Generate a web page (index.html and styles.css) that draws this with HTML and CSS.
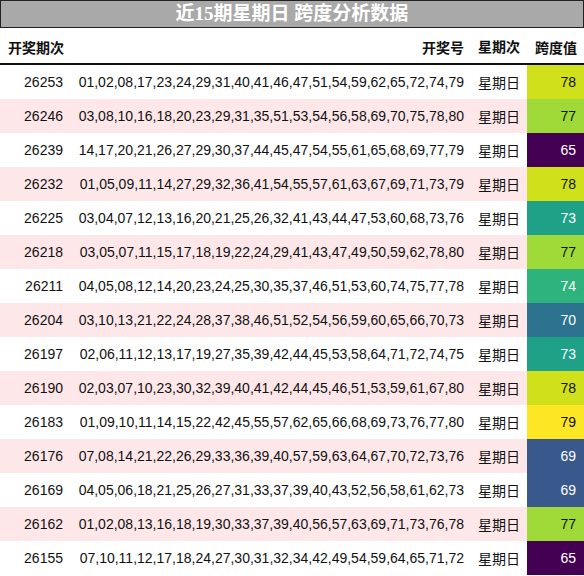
FILE: index.html
```html
<!DOCTYPE html>
<html>
<head>
  <title>近15期星期日 跨度分析数据</title>
  <meta charset="UTF-8">
  <meta name="viewport" content="width=device-width, initial-scale=1.0">
  <link rel="stylesheet" href="styles.css">
</head>
<body>
  <div class="title">近15期星期日 跨度分析数据</div>
  <table class="data">
    <colgroup>
      <col class="c-qi">
      <col class="c-nums">
      <col class="c-day">
      <col class="c-span">
    </colgroup>
    <thead>
      <tr>
        <th class="qi">开奖期次</th>
        <th class="nums">开奖号</th>
        <th class="day">星期次</th>
        <th class="span">跨度值</th>
      </tr>
    </thead>
    <tbody>
      <tr><td class="qi">26253</td><td class="nums">01,02,08,17,23,24,29,31,40,41,46,47,51,54,59,62,65,72,74,79</td><td class="day">星期日</td><td class="span v78">78</td></tr>
      <tr><td class="qi">26246</td><td class="nums">03,08,10,16,18,20,23,29,31,35,51,53,54,56,58,69,70,75,78,80</td><td class="day">星期日</td><td class="span v77">77</td></tr>
      <tr><td class="qi">26239</td><td class="nums">14,17,20,21,26,27,29,30,37,44,45,47,54,55,61,65,68,69,77,79</td><td class="day">星期日</td><td class="span v65">65</td></tr>
      <tr><td class="qi">26232</td><td class="nums">01,05,09,11,14,27,29,32,36,41,54,55,57,61,63,67,69,71,73,79</td><td class="day">星期日</td><td class="span v78">78</td></tr>
      <tr><td class="qi">26225</td><td class="nums">03,04,07,12,13,16,20,21,25,26,32,41,43,44,47,53,60,68,73,76</td><td class="day">星期日</td><td class="span v73">73</td></tr>
      <tr><td class="qi">26218</td><td class="nums">03,05,07,11,15,17,18,19,22,24,29,41,43,47,49,50,59,62,78,80</td><td class="day">星期日</td><td class="span v77">77</td></tr>
      <tr><td class="qi">26211</td><td class="nums">04,05,08,12,14,20,23,24,25,30,35,37,46,51,53,60,74,75,77,78</td><td class="day">星期日</td><td class="span v74">74</td></tr>
      <tr><td class="qi">26204</td><td class="nums">03,10,13,21,22,24,28,37,38,46,51,52,54,56,59,60,65,66,70,73</td><td class="day">星期日</td><td class="span v70">70</td></tr>
      <tr><td class="qi">26197</td><td class="nums">02,06,11,12,13,17,19,27,35,39,42,44,45,53,58,64,71,72,74,75</td><td class="day">星期日</td><td class="span v73">73</td></tr>
      <tr><td class="qi">26190</td><td class="nums">02,03,07,10,23,30,32,39,40,41,42,44,45,46,51,53,59,61,67,80</td><td class="day">星期日</td><td class="span v78">78</td></tr>
      <tr><td class="qi">26183</td><td class="nums">01,09,10,11,14,15,22,42,45,55,57,62,65,66,68,69,73,76,77,80</td><td class="day">星期日</td><td class="span v79">79</td></tr>
      <tr><td class="qi">26176</td><td class="nums">07,08,14,21,22,26,29,33,36,39,40,57,59,63,64,67,70,72,73,76</td><td class="day">星期日</td><td class="span v69">69</td></tr>
      <tr><td class="qi">26169</td><td class="nums">04,05,06,18,21,25,26,27,31,33,37,39,40,43,52,56,58,61,62,73</td><td class="day">星期日</td><td class="span v69">69</td></tr>
      <tr><td class="qi">26162</td><td class="nums">01,02,08,13,16,18,19,30,33,37,39,40,56,57,63,69,71,73,76,78</td><td class="day">星期日</td><td class="span v77">77</td></tr>
      <tr><td class="qi">26155</td><td class="nums">07,10,11,12,17,18,24,27,30,31,32,34,42,49,54,59,64,65,71,72</td><td class="day">星期日</td><td class="span v65">65</td></tr>
    </tbody>
  </table>
</body>
</html>
```

FILE: styles.css
```css
body {
  margin: 0;
  background: #fff;
  font-family: "Liberation Sans", "Noto Sans CJK SC", sans-serif;
  color: #111;
}

.title {
  height: 26px;
  line-height: 26px;
  border: 1px solid #222;
  background-color: #a9a9a9;
  color: #fff;
  font-family: "Liberation Serif", "Noto Sans CJK SC", serif;
  font-size: 19px;
  font-weight: bold;
  text-align: center;
}

.data {
  width: 584px;
  table-layout: fixed;
  border-collapse: collapse;
  font-size: 14px;
  white-space: nowrap;
}

.c-qi { width: 70px; }
.c-nums { width: 401px; }
.c-day { width: 56px; }
.c-span { width: 57px; }

.data th {
  height: 33px;
  padding: 2px 7px 0 8px;
  font-family: "Noto Sans CJK SC", sans-serif;
  font-weight: bold;
  border-bottom: 2px solid #111;
}

.data td {
  height: 34px;
  padding: 0 7px 0 0;
}

.data tbody tr:nth-child(even) {
  background-color: #fde7e9;
}

th.qi {
  text-align: left;
}

td.qi {
  text-align: right;
}

.nums {
  text-align: right;
}

.data .day {
  text-align: center;
  padding: 0;
  font-family: "Noto Sans CJK SC", sans-serif;
}

.data .span {
  text-align: right;
  padding-right: 8px;
}

.v65 { background-color: #440154; color: #fff; }
.v69 { background-color: #39598c; color: #fff; }
.v70 { background-color: #2c718e; color: #fff; }
.v73 { background-color: #1fa188; color: #fff; }
.v74 { background-color: #2eb37c; color: #fff; }
.v77 { background-color: #a0da39; color: #111; }
.v78 { background-color: #d0e11c; color: #111; }
.v79 { background-color: #fde725; color: #111; }
```
